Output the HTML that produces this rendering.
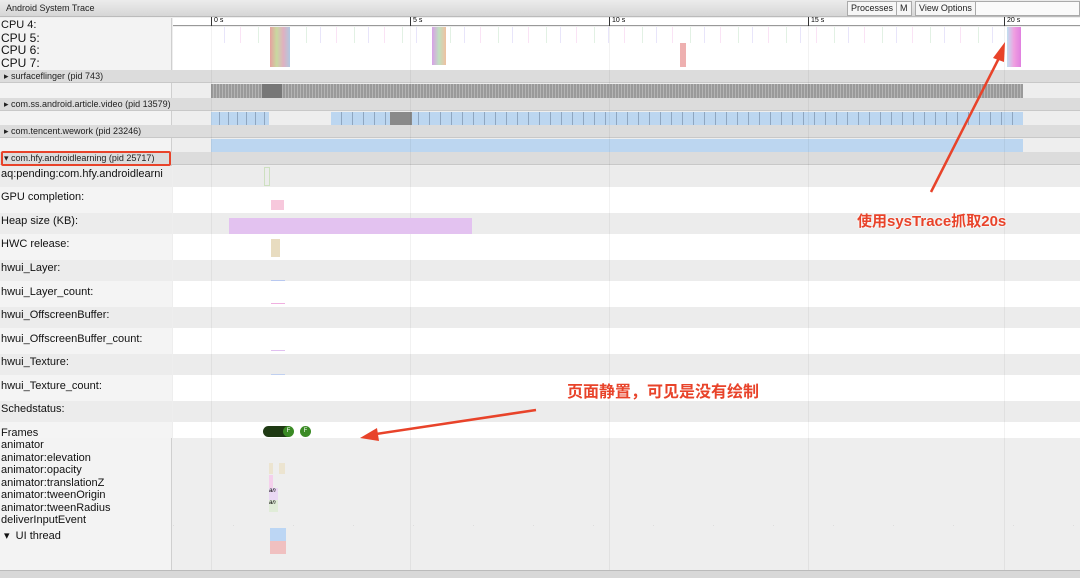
<!DOCTYPE html>
<html><head><meta charset="utf-8"><style>
*{margin:0;padding:0;box-sizing:border-box}
body{width:1080px;height:578px;overflow:hidden;background:#eee;font-family:"Liberation Sans",Arial,sans-serif;position:relative}
.a{position:absolute}
.lbl{position:absolute;left:1px;font-size:11px;color:#111;white-space:nowrap}
.hdr{position:absolute;left:0;width:1080px;height:13px;background:#dcdcdc;border-bottom:1px solid #c8c8c8;font-size:9px;color:#222;padding-left:4px;line-height:13px}
.btn{position:absolute;top:1px;height:15px;border:1px solid #aaa;background:#f6f6f6;font-size:9px;line-height:13px;padding:0 3px;color:#222}
.red{position:absolute;color:#e8432a;font-weight:bold;font-family:"Liberation Sans","Noto Sans CJK SC",sans-serif;text-shadow:0 0 2px #fff,0 0 2px #fff;white-space:nowrap}
</style></head><body>
<div class="a" style="left:0;top:0;width:1080px;height:17px;background:linear-gradient(#ececec,#d6d6d6);border-bottom:1px solid #bbb"></div>
<div class="a" style="left:6px;top:3px;font-size:9px;color:#222">Android System Trace</div>
<div class="btn" style="left:847px">Processes</div>
<div class="btn" style="left:896px">M</div>
<div class="btn" style="left:915px">View Options</div>
<div class="btn" style="left:975px;width:105px;background:#fafafa"></div>
<div class="a" style="left:0;top:18px;width:172px;height:552px;background:#f3f3f3;border-right:1px solid #cfcfcf"></div>
<div class="a" style="left:173px;top:18px;width:907px;height:8px;background:#fff;border-bottom:1px solid #999"></div>
<div class="a" style="left:211px;top:17px;font-size:7px;border-left:1px solid #333;padding-left:2px;height:9px;line-height:8px">0 s</div>
<div class="a" style="left:410px;top:17px;font-size:7px;border-left:1px solid #333;padding-left:2px;height:9px;line-height:8px">5 s</div>
<div class="a" style="left:609px;top:17px;font-size:7px;border-left:1px solid #333;padding-left:2px;height:9px;line-height:8px">10 s</div>
<div class="a" style="left:808px;top:17px;font-size:7px;border-left:1px solid #333;padding-left:2px;height:9px;line-height:8px">15 s</div>
<div class="a" style="left:1004px;top:17px;font-size:7px;border-left:1px solid #333;padding-left:2px;height:9px;line-height:8px">20 s</div>
<div class="a" style="left:173px;top:27px;width:907px;height:43px;background:#fff"></div>
<div class="a" style="left:211px;top:27px;width:800px;height:16px;opacity:.6;background:repeating-linear-gradient(90deg,transparent 0 13px,#d9d4f6 13px 14px,transparent 14px 29px,#f6d0ee 29px 30px,transparent 30px 47px,#cfe8d2 47px 48px)"></div>
<div class="a" style="left:270px;top:27px;width:20px;height:40px;background:linear-gradient(90deg,#e7a0a0,#c8d9a0,#e0b0c0,#b0c8e0)"></div>
<div class="a" style="left:432px;top:27px;width:14px;height:38px;background:linear-gradient(90deg,#d8a0e8,#c0e0c0,#f0c0a0)"></div>
<div class="a" style="left:680px;top:43px;width:6px;height:24px;background:#eeb0b0"></div>
<div class="a" style="left:1007px;top:27px;width:14px;height:40px;background:linear-gradient(90deg,#c0e0f0,#f0a0e0,#e080e0)"></div>
<div class="lbl" style="top:20px;font-size:11px;line-height:11px;height:8px;overflow:hidden">CPU 4:</div>
<div class="lbl" style="top:31px;font-size:12px">CPU 5:</div>
<div class="lbl" style="top:43px;font-size:12px">CPU 6:</div>
<div class="lbl" style="top:56px;font-size:12px">CPU 7:</div>
<div class="hdr" style="top:70px">▸ surfaceflinger (pid 743)</div>
<div class="a" style="left:173px;top:84px;width:907px;height:14px;background:#eee"></div>
<div class="a" style="left:211px;top:84px;width:812px;height:14px;background:repeating-linear-gradient(90deg,#9a9a9a 0 2px,#b5b5b5 2px 3px)"></div>
<div class="a" style="left:262px;top:84px;width:20px;height:14px;background:#777"></div>
<div class="hdr" style="top:98px">▸ com.ss.android.article.video (pid 13579)</div>
<div class="a" style="left:173px;top:112px;width:907px;height:13px;background:#eee"></div>
<div class="a" style="left:211px;top:112px;width:58px;height:13px;background:repeating-linear-gradient(90deg,#bcd6f0 0 8px,#8fa6c0 8px 9px)"></div>
<div class="a" style="left:331px;top:112px;width:692px;height:13px;background:repeating-linear-gradient(90deg,#bcd6f0 0 10px,#8fa6c0 10px 11px)"></div>
<div class="a" style="left:390px;top:112px;width:22px;height:13px;background:#8a8a8a"></div>
<div class="hdr" style="top:125px">▸ com.tencent.wework (pid 23246)</div>
<div class="a" style="left:173px;top:139px;width:907px;height:13px;background:#eee"></div>
<div class="a" style="left:211px;top:139px;width:812px;height:13px;background:#bcd6f0"></div>
<div class="hdr" style="top:152px">▾ com.hfy.androidlearning (pid 25717)</div>
<div class="a" style="left:1px;top:151px;width:170px;height:15px;border:2px solid #e8432a;border-radius:2px"></div>
<div class="a" style="left:173px;top:166px;width:907px;height:272px;background:repeating-linear-gradient(#ececec 0 21px,#fff 21px 47px)"></div>
<div class="a" style="left:0;top:166px;width:172px;height:272px;background:repeating-linear-gradient(#ececec 0 21px,#f4f4f4 21px 47px)"></div>
<div class="a" style="left:173px;top:422px;width:907px;height:16px;background:#fff"></div>
<div class="a" style="left:211px;top:26px;width:1px;height:544px;background:rgba(0,0,0,.05)"></div>
<div class="a" style="left:410px;top:26px;width:1px;height:544px;background:rgba(0,0,0,.05)"></div>
<div class="a" style="left:609px;top:26px;width:1px;height:544px;background:rgba(0,0,0,.05)"></div>
<div class="a" style="left:808px;top:26px;width:1px;height:544px;background:rgba(0,0,0,.05)"></div>
<div class="a" style="left:1004px;top:26px;width:1px;height:544px;background:rgba(0,0,0,.05)"></div>
<div class="a" style="left:264px;top:167px;width:6px;height:19px;border:1px solid #cde0c0"></div>
<div class="a" style="left:271px;top:200px;width:13px;height:10px;background:#f7c8dc"></div>
<div class="a" style="left:229px;top:218px;width:243px;height:16px;background:#e3c2f0"></div>
<div class="a" style="left:271px;top:239px;width:9px;height:18px;background:#e8dcc0"></div>
<div class="a" style="left:271px;top:280px;width:14px;height:1px;background:#b8c8f0"></div>
<div class="a" style="left:271px;top:303px;width:14px;height:1px;background:#f0b0e0"></div>
<div class="a" style="left:271px;top:350px;width:14px;height:1px;background:#e0c0f0"></div>
<div class="a" style="left:271px;top:374px;width:14px;height:1px;background:#c0d0f0"></div>
<div class="lbl" style="top:168px">aq:pending:com.hfy.androidlearni</div>
<div class="lbl" style="top:191px">GPU completion:</div>
<div class="lbl" style="top:215px">Heap size (KB):</div>
<div class="lbl" style="top:238px">HWC release:</div>
<div class="lbl" style="top:262px">hwui_Layer:</div>
<div class="lbl" style="top:286px">hwui_Layer_count:</div>
<div class="lbl" style="top:309px">hwui_OffscreenBuffer:</div>
<div class="lbl" style="top:333px">hwui_OffscreenBuffer_count:</div>
<div class="lbl" style="top:356px">hwui_Texture:</div>
<div class="lbl" style="top:380px">hwui_Texture_count:</div>
<div class="lbl" style="top:403px">Schedstatus:</div>
<div class="a" style="left:263px;top:426px;width:30px;height:11px;border-radius:6px;background:#1f3a14"></div>
<div class="a" style="left:283px;top:426px;width:11px;height:11px;border-radius:50%;background:#3a8a24;color:#fff;font-size:6px;text-align:center;line-height:11px">F</div>
<div class="a" style="left:300px;top:426px;width:11px;height:11px;border-radius:50%;background:#3a8a24;color:#fff;font-size:6px;text-align:center;line-height:11px">F</div>
<div class="lbl" style="top:427px">Frames</div>
<div class="lbl" style="top:439px">animator</div>
<div class="lbl" style="top:452px">animator:elevation</div>
<div class="lbl" style="top:464px">animator:opacity</div>
<div class="lbl" style="top:477px">animator:translationZ</div>
<div class="lbl" style="top:489px">animator:tweenOrigin</div>
<div class="lbl" style="top:502px">animator:tweenRadius</div>
<div class="lbl" style="top:514px">deliverInputEvent</div>
<div class="lbl" style="top:529px;left:4px">▾&nbsp; UI thread</div>
<div class="a" style="left:269px;top:463px;width:4px;height:11px;background:#ece4d0"></div>
<div class="a" style="left:279px;top:463px;width:6px;height:11px;background:#ece4d0"></div>
<div class="a" style="left:269px;top:475px;width:4px;height:13px;background:#f4d0ec"></div>
<div class="a" style="left:269px;top:488px;width:9px;height:12px;background:#ead8f4;font-size:6px;font-style:italic">an</div>
<div class="a" style="left:269px;top:500px;width:9px;height:12px;background:#e0ecd8;font-size:6px;font-style:italic">an</div>
<div class="a" style="left:270px;top:528px;width:16px;height:13px;background:#bcd6f4"></div>
<div class="a" style="left:270px;top:541px;width:16px;height:13px;background:#f0c0c0"></div>
<div class="a" style="left:173px;top:525px;width:907px;height:1px;background:repeating-linear-gradient(90deg,#ddd 0 1px,transparent 1px 60px)"></div>
<div class="a" style="left:0;top:570px;width:1080px;height:8px;background:#d8d8d8;border-top:1px solid #bbb"></div>
<svg class="a" style="left:0;top:0" width="1080" height="578">
<path d="M931 192 L999 58" stroke="#e8432a" stroke-width="2.5" fill="none"/>
<path d="M1005 42 L993 58 L1004 62 Z" fill="#e8432a"/>
<path d="M536 410 L376 434" stroke="#e8432a" stroke-width="2.5" fill="none"/>
<path d="M360 438 L377 428 L379 441 Z" fill="#e8432a"/>
</svg>
<div class="red" style="left:857px;top:210px;font-size:15px">使用sysTrace抓取20s</div>
<div class="red" style="left:567px;top:378px;font-size:16px">页面静置，可见是没有绘制</div>
</body></html>
